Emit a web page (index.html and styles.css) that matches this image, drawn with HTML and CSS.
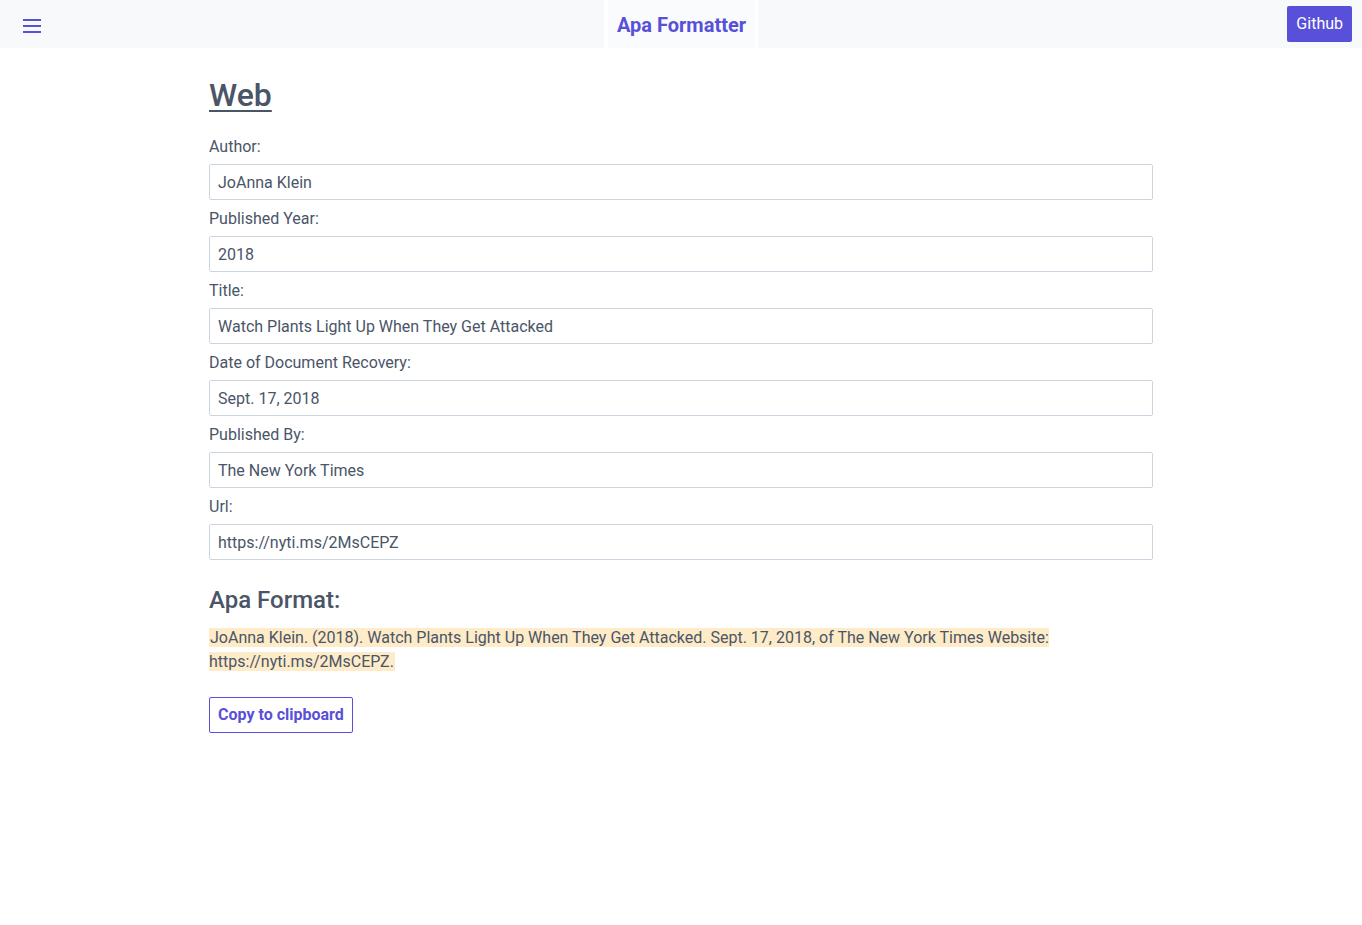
FILE: index.html
```html
<!DOCTYPE html>
<html lang="en">
<head>
<meta charset="utf-8">
<title>Apa Formatter</title>
<link rel="stylesheet" href="styles.css">
</head>
<body>
<header class="topbar">
  <div class="topbar-left">
    <button class="menu-btn" aria-label="Menu">
      <svg width="18" height="14" viewBox="0 0 18 14"><rect x="0" y="0" width="18" height="2" fill="#5850d8"/><rect x="0" y="6" width="18" height="2" fill="#5850d8"/><rect x="0" y="12" width="18" height="2" fill="#5850d8"/></svg>
    </button>
  </div>
  <a class="brand" href="#">Apa Formatter</a>
  <div class="topbar-right">
    <a class="github-btn" href="#">Github</a>
  </div>
</header>
<main class="container">
  <h1 class="page-title">Web</h1>
  <form class="form">
    <div class="field"><label class="label">Author:</label><input class="input" value="JoAnna Klein"></div>
    <div class="field"><label class="label">Published Year:</label><input class="input" value="2018"></div>
    <div class="field"><label class="label">Title:</label><input class="input" value="Watch Plants Light Up When They Get Attacked"></div>
    <div class="field"><label class="label">Date of Document Recovery:</label><input class="input" value="Sept. 17, 2018"></div>
    <div class="field"><label class="label">Published By:</label><input class="input" value="The New York Times"></div>
    <div class="field"><label class="label">Url:</label><input class="input" value="https://nyti.ms/2MsCEPZ"></div>
  </form>
  <h2 class="result-title">Apa Format:</h2>
  <p class="result"><span class="highlight">JoAnna Klein. (2018). Watch Plants Light Up When They Get Attacked. Sept. 17, 2018, of The New York Times Website: https://nyti.ms/2MsCEPZ.</span></p>
  <button class="copy-btn" type="button">Copy to clipboard</button>
</main>
</body>
</html>
```
FILE: styles.css
```css
* { box-sizing: border-box; }
html, body { margin: 0; padding: 0; }
body {
  font-family: Roboto, "Liberation Sans", sans-serif;
  font-size: 16px;
  line-height: 24px;
  color: #4a5568;
  background: #fff;
}
.topbar {
  height: 48px;
  background: #f8f9fb;
  display: grid;
  grid-template-columns: minmax(0, 1fr) auto minmax(0, 1fr);
  align-items: stretch;
}
.topbar-left, .topbar-right {
  display: flex;
  align-items: center;
}
.topbar-right { justify-content: flex-end; padding-right: 10px; }
.menu-btn {
  border: 0;
  background: transparent;
  padding: 0;
  margin-left: 23px;
  margin-top: 4px;
  width: 18px;
  height: 14px;
  display: flex;
  cursor: pointer;
}
.brand {
  display: flex;
  align-items: center;
  padding: 0 9px;
  background: #fafbfd;
  border-left: 4px solid #fff;
  border-right: 3px solid #fff;
  color: #5850d8;
  font-weight: 700;
  font-size: 20px;
  text-decoration: none;
  padding-top: 2px;
}
.github-btn {
  display: inline-block;
  background: #5850d8;
  color: #fff;
  text-decoration: none;
  height: 36px;
  line-height: 36px;
  padding: 0 9px;
  border-radius: 2px;
}
.container {
  width: 944px;
  margin: 0 auto;
  padding-top: 25px;
}
.page-title {
  margin: 0 0 19px;
  font-size: 32px;
  line-height: 44px;
  font-weight: 500;
  text-decoration: underline;
  text-decoration-thickness: 2px;
  text-underline-offset: 4px;
}
.form {
  display: flex;
  flex-direction: column;
  gap: 8px;
}
.field {
  display: flex;
  flex-direction: column;
  gap: 6px;
}
.label { display: block; line-height: 22px; }
.input {
  width: 100%;
  height: 36px;
  border: 1px solid #cbd5e0;
  border-radius: 2px;
  padding: 0 8px;
  font: inherit;
  color: #4a5568;
  background: #fff;
}
.result-title {
  margin: 24px 0 0;
  font-size: 24px;
  line-height: 32px;
  font-weight: 500;
}
.result {
  margin: 10px 0 0;
}
.highlight {
  background: #feebc8;
  padding: 0 1px;
}
.copy-btn {
  margin-top: 23px;
  height: 36px;
  padding: 0 8px;
  border: 1px solid #5850d8;
  border-radius: 2px;
  background: #fff;
  color: #5850d8;
  font: inherit;
  font-weight: 700;
  cursor: pointer;
}
```
